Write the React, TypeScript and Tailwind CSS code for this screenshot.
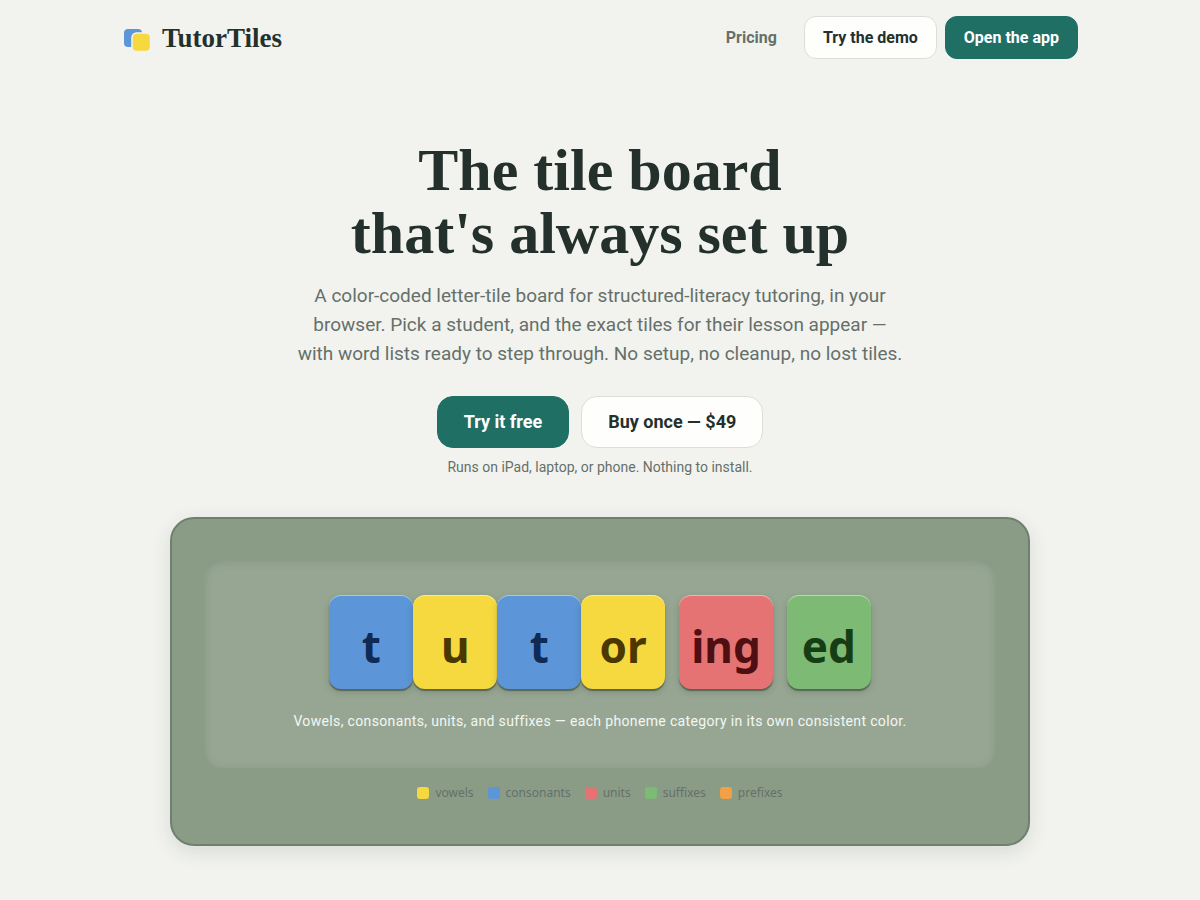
import clsx from 'clsx'

type Kind = 'vowel' | 'consonant' | 'unit' | 'suffix' | 'prefix'

interface Tile {
  text: string
  kind: Kind
}

const tileColors: Record<Kind, string> = {
  vowel: 'bg-[#f6d93f] text-[#4a3800]',
  consonant: 'bg-[#5c96d8] text-[#0f2a55]',
  unit: 'bg-[#e57373] text-[#4f0f12]',
  suffix: 'bg-[#7dba74] text-[#173d14]',
  prefix: 'bg-[#f0a046] text-[#4a2800]',
}

// each group is one chunk of the word, tiles inside it touch
const groups: Tile[][] = [
  [
    { text: 't', kind: 'consonant' },
    { text: 'u', kind: 'vowel' },
    { text: 't', kind: 'consonant' },
    { text: 'or', kind: 'vowel' },
  ],
  [{ text: 'ing', kind: 'unit' }],
  [{ text: 'ed', kind: 'suffix' }],
]

const legend: { label: string; kind: Kind }[] = [
  { label: 'vowels', kind: 'vowel' },
  { label: 'consonants', kind: 'consonant' },
  { label: 'units', kind: 'unit' },
  { label: 'suffixes', kind: 'suffix' },
  { label: 'prefixes', kind: 'prefix' },
]

function Logo() {
  return (
    <svg viewBox="0 0 30 30" className="size-[30px]" aria-hidden="true">
      <rect x="2" y="6" width="18" height="18" rx="4" fill="#5c96d8" />
      <rect x="10" y="10" width="18.5" height="18.5" rx="4.5" fill="#f6d93f" stroke="#f2f3ef" strokeWidth="1.5" />
    </svg>
  )
}

function Header() {
  return (
    <header className="mx-auto flex max-w-[1000px] items-center justify-between px-[22px] py-4">
      <a href="#" className="flex items-center gap-[10px]">
        <Logo />
        <span className="font-['Liberation_Serif',serif] text-[27px] leading-8 font-bold">TutorTiles</span>
      </a>
      <nav className="flex items-center gap-2 text-[16px] leading-[21px] font-bold">
        <a href="#pricing" className="mr-[19px] text-[#65706a]">
          Pricing
        </a>
        <a href="#demo" className="rounded-xl border border-[#dcdfd9] bg-[#fefefd] px-[18px] py-[10px]">
          Try the demo
        </a>
        <a href="#app" className="rounded-xl border border-[#1f6f65] bg-[#1f6f65] px-[18px] py-[10px] text-white">
          Open the app
        </a>
      </nav>
    </header>
  )
}

function Board() {
  return (
    <section className="mx-auto mt-10 max-w-[860px] rounded-3xl border-2 border-[#6f806e] bg-[#8a9c86] px-8 py-10 shadow-[0_6px_20px_rgba(36,48,43,0.12)]">
      <div className="rounded-[18px] bg-white/10 px-6 py-9 shadow-[inset_0_2px_8px_rgba(60,85,60,0.22)]">
        <div className="flex justify-center gap-[14px]">
          {groups.map((group, i) => (
            <div key={i} className="flex">
              {group.map((tile, j) => (
                <span
                  key={j}
                  className={clsx(
                    "flex h-[94px] min-w-[84px] items-center justify-center rounded-xl px-3 pt-2 font-['Noto_Sans',sans-serif] text-[44px] leading-none font-bold shadow-[0_2px_1px_rgba(30,45,30,0.45),0_3px_7px_rgba(30,45,30,0.18),inset_0_1px_0_rgba(255,255,255,0.45)]",
                    tileColors[tile.kind],
                  )}
                >
                  {tile.text}
                </span>
              ))}
            </div>
          ))}
        </div>
        <p className="mt-[22px] text-center text-[14px] leading-[21px] tracking-wide text-white/90">
          Vowels, consonants, units, and suffixes — each phoneme category in its own consistent color.
        </p>
      </div>
      <ul className="mt-4 mb-[2px] flex justify-center gap-[14px] font-['Noto_Sans',sans-serif] text-[12px] leading-[18px] text-[#65706a]">
        {legend.map((item) => (
          <li key={item.label} className="flex items-center gap-[6px]">
            <span className={clsx('size-3 rounded-[3px]', tileColors[item.kind])} />
            {item.label}
          </li>
        ))}
      </ul>
    </section>
  )
}

export default function App() {
  return (
    <div className="min-h-screen bg-[#f2f3ef] font-[Roboto,sans-serif] text-[#24302b]">
      <Header />
      <main className="px-6 pt-16 pb-[54px]">
        <section className="text-center">
          <h1 className="font-['Liberation_Serif',serif] text-[60px] leading-[63px] font-bold">
            The tile board
            <br />
            that's always set up
          </h1>
          <p className="mx-auto mt-4 max-w-[610px] text-[19px] leading-[29px] text-[#65706a]">
            A color-coded letter-tile board for structured-literacy tutoring, in your browser. Pick a student, and the
            exact tiles for their lesson appear — with word lists ready to step through. No setup, no cleanup, no lost
            tiles.
          </p>
          <div className="mt-7 flex justify-center gap-3 text-[18px] leading-6 font-bold">
            <a href="#demo" className="rounded-2xl border border-[#1f6f65] bg-[#1f6f65] px-[26px] py-[13px] text-white">
              Try it free
            </a>
            <a href="#pricing" className="rounded-2xl border border-[#dcdfd9] bg-[#fefefd] px-[26px] py-[13px]">
              Buy once — $49
            </a>
          </div>
          <p className="mt-[9px] text-[14px] leading-5 text-[#65706a]">
            Runs on iPad, laptop, or phone. Nothing to install.
          </p>
        </section>
        <Board />
      </main>
    </div>
  )
}
